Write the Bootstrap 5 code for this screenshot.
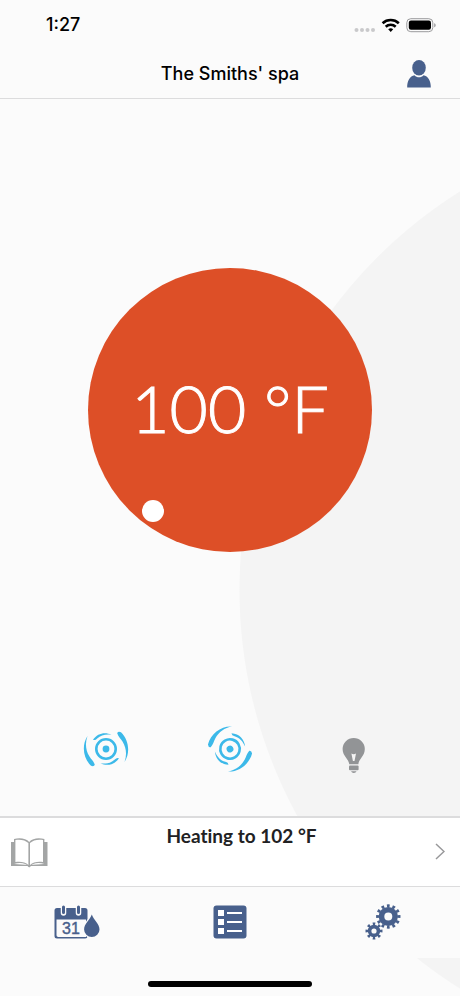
<!DOCTYPE html>
<html lang="en">
<head>
<meta charset="utf-8">
<meta name="viewport" content="width=device-width, initial-scale=1">
<title>The Smiths' spa</title>
<link href="https://cdn.jsdelivr.net/npm/bootstrap@5.3.0/dist/css/bootstrap.min.css" rel="stylesheet">
<style>
  body { font-family: Inter, "Liberation Sans", sans-serif; color: #000; }
  .spa-app {
    background: radial-gradient(circle at calc(100% + 250px) 590px, #f4f4f4 470px, #fbfbfb 471px);
  }
  .spa-app svg { display: block; }
  .status-line { height: 50px; padding: 0 24px 0 46px; background: #fbfbfb; }
  .clock { font-size: 18px; line-height: 24px; font-weight: 500; }
  .title-bar {
    display: grid; grid-template-columns: 48px 1fr 48px;
    height: 49px; padding: 0 17px; background: #fbfbfb; border-bottom: 1px solid #dcdcdd;
  }
  .title-bar h1 { grid-column: 2; font-size: 18px; line-height: 24px; font-weight: 500; }
  .bare { background: none; border: 0; padding: 0; color: inherit; }
  .navy { color: #48608c; }
  .spa-main { padding: 169px 0 43px; }
  .dial {
    width: 284px; height: 284px; padding-bottom: 4px; border-radius: 50%;
    background: #dd4f27; color: #fff;
    font-family: Lato, "Open Sans", sans-serif; font-weight: 300; font-size: 66px; line-height: 72px;
    -webkit-text-stroke: 1px #fff;
  }
  .knob { left: 54px; top: 232px; width: 22px; height: 22px; }
  .controls { gap: 76px; color: #3cb9e9; }
  .lamp { color: #929496; }
  .notice {
    height: 71px; padding: 0 15px 0 10px; color: #212123; background: #fff;
    border-top: 2px solid #dcdcdd; border-bottom: 1px solid #dcdcdd;
    font-family: Lato, "Open Sans", sans-serif; font-weight: 700; font-size: 19px; line-height: 24px;
    font-variant-ligatures: none;
  }
  .notice-text { padding-top: 6px; }
  .tabs { height: 71px; padding-bottom: 2px; background: #fbfbfb; }
  .home-area { height: 38px; padding-bottom: 9px; }
  .home-bar { width: 164px; height: 6px; background: #000; }
</style>
</head>
<body>
<div class="spa-app d-flex flex-column min-vh-100 overflow-hidden">

  <div class="status-line d-flex align-items-center justify-content-between">
    <span class="clock">1:27</span>
    <svg width="82" height="18" viewBox="354 16 82 18" aria-hidden="true">
      <g fill="#c9c9cb"><circle cx="356.500" cy="30" r="2"/><circle cx="362" cy="30" r="2"/><circle cx="367.500" cy="30" r="2"/><circle cx="373" cy="30" r="2"/></g>
      <g fill="none" stroke="#000" stroke-width="2.600">
        <path d="M382.600 23.200a12 12 0 0 1 16.200 0"/>
        <path d="M385.700 26.700a7.300 7.300 0 0 1 10 0"/>
      </g>
      <path d="M390.700 32l-2.500-2.700a3.800 3.800 0 0 1 5 0z"/>
      <rect x="406.800" y="18.700" width="26" height="13" rx="4" fill="none" stroke="#9b9b9d"/>
      <rect x="408.800" y="20.600" width="22.200" height="9.200" rx="2.200"/>
      <path d="M434.200 23.200c2 .8 2 3.200 0 4z" fill="#9b9b9d"/>
    </svg>
  </div>

  <header class="title-bar align-items-center">
    <h1 class="m-0 text-center">The Smiths' spa</h1>
    <button class="bare navy d-flex justify-content-center" type="button" aria-label="Account">
      <svg width="26" height="30" viewBox="0 0 26 30" fill="currentColor" aria-hidden="true">
        <path d="M1.200 28.500C1 22 4 17 8.500 16.200c2.500 2.800 6.500 2.800 9 0C22 17 25 22 24.800 28.500z"/>
        <ellipse cx="13" cy="9" rx="7.400" ry="8.600" fill="#fbfbfb"/>
        <ellipse cx="13" cy="8.800" rx="6.800" ry="7.700"/>
      </svg>
    </button>
  </header>

  <main class="spa-main flex-grow-1 d-flex flex-column align-items-center">
    <button class="dial bare position-relative d-flex align-items-center justify-content-center" type="button">
      100 °F
      <span class="knob position-absolute rounded-circle bg-white"></span>
    </button>

    <div class="controls d-flex justify-content-center mt-auto">
      <button class="bare" type="button" aria-label="Jet 1">
        <svg width="48" height="48" viewBox="-24 -24 48 48" fill="currentColor" aria-hidden="true">
          <g id="jet">
            <circle r="3.400"/>
            <circle r="9.700" fill="none" stroke="currentColor" stroke-width="2.600"/>
            <g id="blades">
              <path d="M-18.500-13C-21-6-20.500 1-16.500 7.500c1.800 3 4 4.500 5.300 8.300q-.8 2.200-3.800 1C-23 9-24.500-4-18.500-13z"/>
              <path d="M-13-9.200C-8.500-16-1-17.300 5.500-14.300-.5-15-5-14-8.800-10.400q-2 2.200-4.200 1.200z"/>
            </g>
            <use href="#blades" transform="rotate(180)"/>
          </g>
        </svg>
      </button>
      <button class="bare" type="button" aria-label="Jet 2">
        <svg width="48" height="48" viewBox="-24 -24 48 48" fill="currentColor" aria-hidden="true">
          <use href="#jet" transform="rotate(60)"/>
        </svg>
      </button>
      <button class="bare lamp" type="button" aria-label="Light">
        <svg width="48" height="48" viewBox="330 725 48 48" fill="currentColor" aria-hidden="true">
          <path fill-rule="evenodd" d="M349.200 764.200c-.2-5-6.600-8-6.600-15.200a11.100 11.100 0 0 1 22.200 0c0 7.200-6.200 10.200-6.400 15.200zM351.400 753.600l1.500 7.400h1.600l1.500-7.400q-2.300 1.200-4.600 0z"/>
          <rect x="349" y="765.500" width="9.600" height="4.800" rx="1"/>
          <path d="M351 771.200h5.600q-.8 1.800-2.800 1.800t-2.800-1.800z"/>
        </svg>
      </button>
    </div>
  </main>

  <button class="notice bare w-100 d-flex align-items-center justify-content-between" type="button">
    <svg width="38" height="34" viewBox="10 834 38 34" aria-hidden="true">
      <path d="M11 841h3v22l15 1 15-1v-22h3.500v24H31l-1.800 1.500L27.500 865H11z" fill="#a3a5a5"/>
      <path d="M29.200 841c-3-4-10-4.500-15.200-3v25c6-2 12-1 15.200 3 3.200-4 9.200-5 15.200-3v-25c-5.200-1.500-12.200-1-15.200 3z" fill="#a3a5a5"/>
      <path d="M28.400 842c-3-3-8.500-4-13-3v22c5-.8 10 0 13 3zM30 842c3-3 8.500-4 13-3v22c-5-.8-10 0-13 3z" fill="#fff"/>
    </svg>
    <span class="notice-text align-self-start">Heating to 102 °F</span>
    <svg width="10" height="18" viewBox="0 0 10 18" fill="none" stroke="#98989a" stroke-width="1.500" aria-hidden="true"><path d="M1 1l8 7.500L1 16"/></svg>
  </button>

  <nav class="tabs row g-0 align-items-center navy" aria-label="Main">
    <div class="col-4 d-flex justify-content-center">
      <button class="bare" type="button" aria-label="Water care calendar">
        <svg width="48" height="38" viewBox="53 903 48 38" fill="currentColor" aria-hidden="true">
          <path fill-rule="evenodd" d="M57 908h28a2.500 2.500 0 0 1 2.500 2.500v25.500a2.500 2.500 0 0 1-2.500 2.500H57a2.500 2.500 0 0 1-2.500-2.500v-25.500a2.500 2.500 0 0 1 2.500-2.500zM56.500 919.500v15.700q0 1.800 1.800 1.800H86v-17.500z"/>
          <g stroke-linecap="round"><path d="M63.500 907v6M78.500 907v6" stroke="#fbfbfb" stroke-width="5.500"/><path d="M63.500 907v5.500M78.500 907v5.500" stroke="currentColor" stroke-width="3"/></g>
          <text x="71" y="934" text-anchor="middle" font-family="Liberation Sans, sans-serif" font-size="16" stroke="currentColor" stroke-width=".4">31</text>
          <path d="M91.800 914.500c2 5.500 7.700 9.500 7.700 15a7.700 7.500 0 0 1-15.400 0c0-5.500 5.700-9.500 7.700-15z" stroke="#fbfbfb" stroke-width="2.400" paint-order="stroke"/>
        </svg>
      </button>
    </div>
    <div class="col-4 d-flex justify-content-center">
      <button class="bare" type="button" aria-label="List">
        <svg width="34" height="34" viewBox="0 0 34 34" aria-hidden="true">
          <rect x=".5" y=".5" width="33" height="33" rx="3" fill="currentColor"/>
          <g fill="#fff"><rect x="5" y="5" width="6" height="6"/><rect x="5" y="14" width="6" height="6"/><rect x="5" y="23" width="6" height="6"/>
          <rect x="14" y="7" width="15" height="2"/><rect x="14" y="16" width="15" height="2"/><rect x="14" y="25" width="15" height="2"/></g>
        </svg>
      </button>
    </div>
    <div class="col-4 d-flex justify-content-center">
      <button class="bare" type="button" aria-label="Settings">
        <svg width="36" height="38" viewBox="365 903 36 38" fill="none" stroke="currentColor" aria-hidden="true">
          <circle cx="388.300" cy="916.500" r="6.800" stroke-width="5.600"/>
          <circle cx="388.300" cy="916.500" r="10.600" stroke-width="3.200" pathLength="24" stroke-dasharray="1 1" stroke-dashoffset=".5"/>
          <circle cx="374" cy="931" r="4.400" stroke-width="3.600"/>
          <circle cx="374" cy="931" r="7" stroke-width="3" pathLength="16" stroke-dasharray=".9 1.100" stroke-dashoffset=".45"/>
        </svg>
      </button>
    </div>
  </nav>

  <div class="home-area d-flex align-items-end justify-content-center">
    <div class="home-bar rounded-pill"></div>
  </div>
</div>
<script src="https://cdn.jsdelivr.net/npm/bootstrap@5.3.0/dist/js/bootstrap.bundle.min.js"></script>
</body>
</html>
